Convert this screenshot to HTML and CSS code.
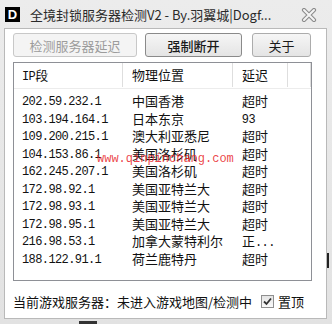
FILE: index.html
```html
<!DOCTYPE html>
<html lang="zh-CN">
<head>
  <meta charset="UTF-8">
  <title>全境封锁服务器检测V2</title>
  <link rel="stylesheet" href="styles.css">
</head>
<body>
  <div class="window">
    <div class="titlebar">
      <span class="app-icon">D</span>
      <span class="title">全境封锁服务器检测V2 - By.羽翼城|Dogf...</span>
      <svg class="close" width="16" height="14" viewBox="0 0 16 14">
        <path d="M3 2 L13 12 M13 2 L3 12" stroke="#8c8c8c" stroke-width="4.2" stroke-linecap="round"/>
        <path d="M3 2 L13 12 M13 2 L3 12" stroke="#f4f4f4" stroke-width="2" stroke-linecap="round"/>
      </svg>
    </div>

    <div class="client">
      <div class="toolbar">
        <button class="btn btn-check" disabled>检测服务器延迟</button>
        <button class="btn btn-default">强制断开</button>
        <button class="btn btn-about">关于</button>
      </div>

      <div class="list">
        <div class="list-head">
          <div class="col col-ip"><span class="mono">IP</span>段</div>
          <div class="col col-loc">物理位置</div>
          <div class="col col-ms">延迟</div>
          <div class="col col-rest"></div>
        </div>
        <div class="list-body">
          <div class="row"><div class="col col-ip mono">202.59.232.1</div><div class="col col-loc">中国香港</div><div class="col col-ms">超时</div></div>
          <div class="row"><div class="col col-ip mono">103.194.164.1</div><div class="col col-loc">日本东京</div><div class="col col-ms num">93</div></div>
          <div class="row"><div class="col col-ip mono">109.200.215.1</div><div class="col col-loc">澳大利亚悉尼</div><div class="col col-ms">超时</div></div>
          <div class="row"><div class="col col-ip mono">104.153.86.1</div><div class="col col-loc">美国洛杉矶</div><div class="col col-ms">超时</div></div>
          <div class="row"><div class="col col-ip mono">162.245.207.1</div><div class="col col-loc">美国洛杉矶</div><div class="col col-ms">超时</div></div>
          <div class="row"><div class="col col-ip mono">172.98.92.1</div><div class="col col-loc">美国亚特兰大</div><div class="col col-ms">超时</div></div>
          <div class="row"><div class="col col-ip mono">172.98.93.1</div><div class="col col-loc">美国亚特兰大</div><div class="col col-ms">超时</div></div>
          <div class="row"><div class="col col-ip mono">172.98.95.1</div><div class="col col-loc">美国亚特兰大</div><div class="col col-ms">超时</div></div>
          <div class="row"><div class="col col-ip mono">216.98.53.1</div><div class="col col-loc">加拿大蒙特利尔</div><div class="col col-ms">正<span class="mono">...</span></div></div>
          <div class="row"><div class="col col-ip mono">188.122.91.1</div><div class="col col-loc">荷兰鹿特丹</div><div class="col col-ms">超时</div></div>
        </div>
      </div>

      <div class="status">
        <span class="status-text">当前游戏服务器：未进入游戏地图/检测中</span>
        <label class="topmost">
          <span class="checkbox">
            <svg width="9" height="9" viewBox="0 0 9 9"><path d="M1 4.5 L3.5 7 L8 1.5" fill="none" stroke="#333" stroke-width="1.8"/></svg>
          </span>
          置顶
        </label>
      </div>
    </div>

    <div class="watermark">www.qinpinchang.com</div>
    <div class="mark-right"></div>
    <div class="mark-bottom"></div>
  </div>
</body>
</html>
```

FILE: styles.css
```css
body {
  margin: 0;
  font-family: "Noto Sans CJK SC", "Liberation Sans", sans-serif;
  background-color: #e6e6e6;
}

.window {
  position: relative;
  width: 332px;
  height: 324px;
  background: linear-gradient(#ececec, #e2e2e2);
  display: flex;
  flex-direction: column;
  overflow: hidden;
}

.titlebar {
  height: 28px;
  display: flex;
  align-items: center;
  padding-left: 5px;
  box-sizing: border-box;
}

.app-icon {
  width: 15px;
  height: 15px;
  background-color: #000;
  color: #fff;
  font-family: "Liberation Sans", sans-serif;
  font-weight: bold;
  font-size: 13px;
  line-height: 15px;
  text-align: center;
  margin-right: 10px;
}

.title {
  font-size: 13px;
  color: #2a2a2a;
  white-space: nowrap;
  flex: 1;
}

.close {
  margin-right: 15px;
  margin-top: 1px;
}

.client {
  height: 291px;
  margin: 0 5px 0 4px;
  background-color: #fff;
  border: 1px solid #b9b9b9;
  box-sizing: border-box;
  padding: 4px 0 0 8px;
}

.toolbar {
  display: flex;
  height: 24px;
}

.btn {
  height: 24px;
  padding: 0;
  font-family: "Noto Sans CJK SC", sans-serif;
  font-size: 13px;
  color: #1a1a1a;
  border: 1px solid #acacac;
  border-radius: 3px;
  background: linear-gradient(#f6f6f6, #e4e4e4);
}

.btn-check {
  width: 124px;
  color: #9c9c9c;
  background: #f4f4f4;
  border-color: #c8c8c8;
}

.btn-default {
  width: 97px;
  margin-left: 8px;
  border-color: #8a8a8a;
  font-weight: 500;
}

.btn-about {
  width: 59px;
  margin-left: 10px;
}

.list {
  margin-top: 5px;
  width: 299px;
  height: 219px;
  border: 1px solid #8e9096;
  box-sizing: border-box;
  font-size: 13px;
  color: #111;
}

.list-head {
  display: flex;
  height: 25px;
  border-bottom: 1px solid #ececec;
  line-height: 24px;
}

.list-head .col {
  border-right: 1px solid #dedede;
  box-sizing: border-box;
  height: 24px;
}

.list-body {
  padding-top: 3px;
}

.row {
  display: flex;
  height: 17.5px;
  line-height: 17.5px;
}

.col {
  white-space: nowrap;
  overflow: hidden;
}

.col-ip {
  width: 109px;
  padding-left: 8px;
  box-sizing: border-box;
}

.row .col-ip {
  padding-top: 2px;
}

.col-loc {
  width: 110px;
  padding-left: 9px;
  box-sizing: border-box;
}

.col-ms {
  width: 55px;
  padding-left: 9px;
  box-sizing: border-box;
}

.col-rest {
  width: 23px;
}

.mono {
  font-family: "Liberation Mono", monospace;
  font-size: 12px;
  letter-spacing: -0.6px;
}

.num {
  font-family: "Liberation Sans", sans-serif;
  font-size: 12px;
  padding-top: 1px;
}

.status {
  margin-top: 11px;
  display: flex;
  align-items: center;
  font-size: 13px;
  color: #111;
  white-space: nowrap;
}

.topmost {
  display: flex;
  align-items: center;
  margin-left: 9px;
}

.checkbox {
  width: 11px;
  height: 11px;
  border: 1px solid #8f8f8f;
  background: linear-gradient(#e4e4e4, #fafafa);
  display: flex;
  align-items: center;
  justify-content: center;
  margin-right: 4px;
}

.watermark {
  position: absolute;
  left: 97px;
  top: 152px;
  font-family: "Liberation Mono", monospace;
  font-size: 12px;
  color: rgba(232, 30, 40, 0.85);
}

.mark-right {
  position: absolute;
  right: 3px;
  top: 253px;
  width: 2px;
  height: 15px;
  background-color: #222;
}

.mark-bottom {
  position: absolute;
  left: 79px;
  bottom: 0;
  width: 18px;
  height: 3px;
  background-color: #333;
}
```
